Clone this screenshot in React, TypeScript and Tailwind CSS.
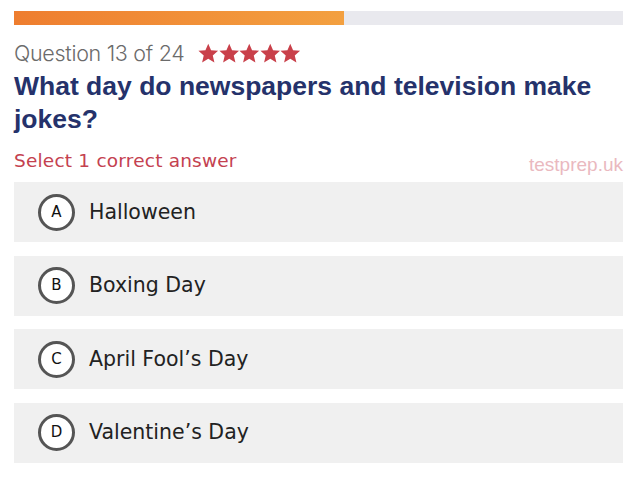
const options = [
  { letter: "A", text: "Halloween" },
  { letter: "B", text: "Boxing Day" },
  { letter: "C", text: "April Fool’s Day" },
  { letter: "D", text: "Valentine’s Day" },
];

function Star() {
  return (
    <svg viewBox="0 0 24 24" className="w-[20.5px] h-[20.5px]" fill="#c9404a">
      <path d="M12 0.8l3.3 7.6 8.2.7-6.2 5.5 1.9 8.1L12 18.4l-7.2 4.3 1.9-8.1L.5 9.1l8.2-.7z" />
    </svg>
  );
}

export default function App() {
  return (
    <div className="w-[640px] h-[480px] bg-white pl-[14px] pt-[11px] overflow-hidden">
      <div className="w-[609px]">
        {/* Progress */}
        <div className="h-[14px] bg-[#e9e9ee]">
          <div className="h-full w-[330px] bg-gradient-to-r from-[#ee7d2f] to-[#f3a040]" />
        </div>

        {/* Header */}
        <div className="mt-[15px] flex items-center gap-[14px] font-['Inter',sans-serif] text-[21.5px] leading-[26px] text-[#6b6b6b] font-light tracking-[-0.3px]">
          <span>Question 13 of 24</span>
          <div className="flex">
            <Star />
            <Star />
            <Star />
            <Star />
            <Star />
          </div>
        </div>

        <h1 className="mt-[4px] font-['Liberation_Sans',Arial,sans-serif] font-bold text-[26.5px] leading-[33px] text-[#25326b]">
          What day do newspapers and television make jokes?
        </h1>

        <div className="mt-[14px] flex items-end justify-between">
          <span className="font-['DejaVu_Sans',sans-serif] text-[18.5px] leading-[22px] tracking-[0.2px] text-[#c4414f]">
            Select 1 correct answer
          </span>
          <span className="font-['Liberation_Sans',Arial,sans-serif] text-[19px] leading-[20px] text-[#eab9bf] mb-[-3px]">
            testprep.uk
          </span>
        </div>

        {/* Options */}
        <div className="mt-[10px] flex flex-col gap-[13.5px]">
          {options.map((o) => (
            <div key={o.letter} className="h-[60px] bg-[#f0f0f0] flex items-center pl-[24px] gap-[14px]">
              <div className="w-[37px] h-[37px] rounded-full border-[3px] border-[#555] bg-white flex items-center justify-center font-['DejaVu_Sans',sans-serif] text-[15px] text-[#111]">
                {o.letter}
              </div>
              <span className="font-['DejaVu_Sans',sans-serif] text-[20.5px] text-[#222]">{o.text}</span>
            </div>
          ))}
        </div>
      </div>
    </div>
  );
}
